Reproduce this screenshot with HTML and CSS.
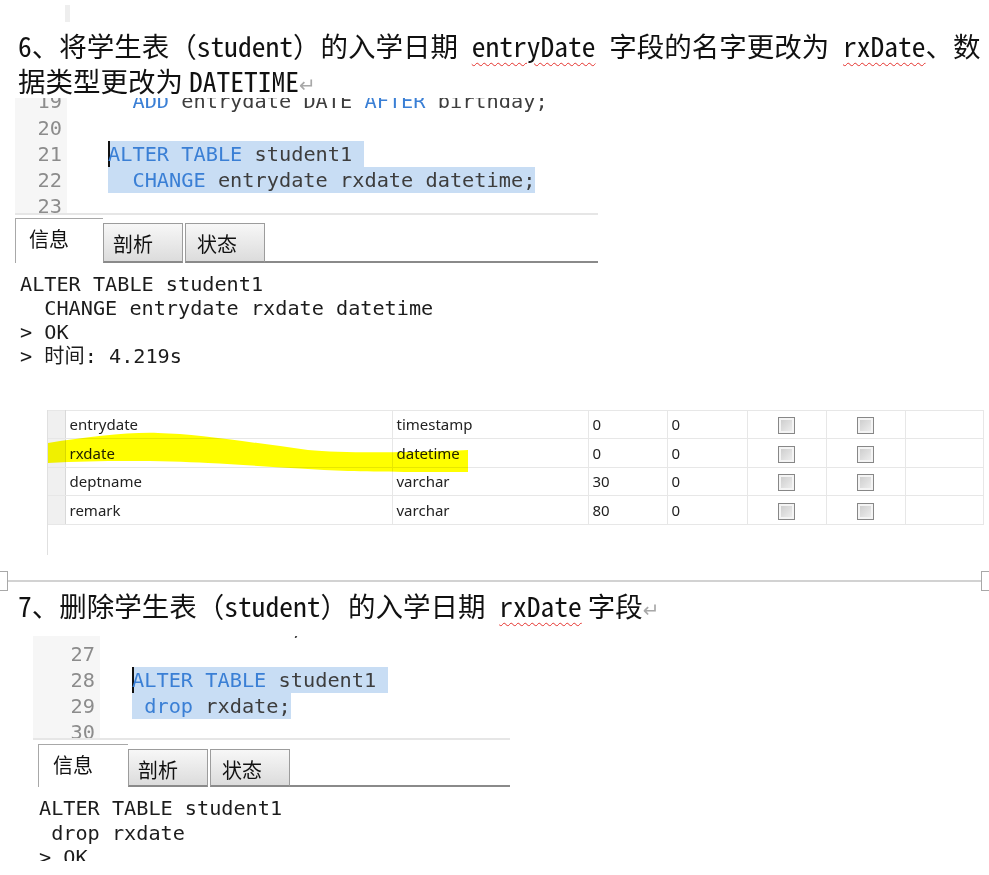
FILE: index.html
```html
<!DOCTYPE html>
<html lang="zh">
<head>
<meta charset="utf-8">
<title>ALTER TABLE 练习</title>
<link rel="stylesheet" href="styles.css">
</head>
<body>
<div class="topmark"></div>
<p class="q q1">6、将学生表（student）的入学日期 <span class="sp">entryDate</span> 字段的名字更改为 <span class="sp">rxDate</span>、数<br>据类型更改为<span class="lat">DATETIME</span><span class="ret">↵</span></p>

<div class="shot shot1">
  <div class="editor ed1">
    <div class="lines">
      <div class="ln"><span class="num">19</span><span class="code">  <span class="kw">ADD</span> entrydate DATE <span class="kw">AFTER</span> birthday;</span></div>
      <div class="ln"><span class="num">20</span><span class="code"></span></div>
      <div class="ln"><span class="num">21</span><span class="code"><span class="sel caret"><span class="kw">ALTER TABLE</span> student1 </span></span></div>
      <div class="ln"><span class="num">22</span><span class="code"><span class="sel">  <span class="kw">CHANGE</span> entrydate rxdate datetime;</span></span></div>
      <div class="ln"><span class="num">23</span><span class="code"></span></div>
    </div>
  </div>
  <div class="tabs tabs1">
    <div class="tab on">信息</div>
    <div class="tab">剖析</div>
    <div class="tab t3">状态</div>
    <div class="rest"></div>
  </div>
  <div class="msg msg1">ALTER TABLE student1
  CHANGE entrydate rxdate datetime
&gt; OK
&gt; 时间: 4.219s</div>
</div>

<div class="grid-wrap">
  <table class="fields">
    <colgroup>
      <col class="c-g"><col class="c-name"><col class="c-type"><col class="c-n"><col class="c-n2"><col class="c-n"><col class="c-n"><col class="c-last">
    </colgroup>
    <tbody>
      <tr><td class="g"></td><td>entrydate</td><td>timestamp</td><td>0</td><td>0</td><td class="ck"><span class="cb"></span></td><td class="ck"><span class="cb"></span></td><td></td></tr>
      <tr><td class="g"></td><td>rxdate</td><td>datetime</td><td>0</td><td>0</td><td class="ck"><span class="cb"></span></td><td class="ck"><span class="cb"></span></td><td></td></tr>
      <tr><td class="g"></td><td>deptname</td><td>varchar</td><td>30</td><td>0</td><td class="ck"><span class="cb"></span></td><td class="ck"><span class="cb"></span></td><td></td></tr>
      <tr><td class="g"></td><td>remark</td><td>varchar</td><td>80</td><td>0</td><td class="ck"><span class="cb"></span></td><td class="ck"><span class="cb"></span></td><td></td></tr>
    </tbody>
  </table>
  <svg class="marker" width="430" height="70" viewBox="0 0 430 70" aria-hidden="true">
    <path d="M0,33 C40,27 80,22 110,23 C150,24 200,32 260,40 C300,44 380,42 420,40 L420,62 C380,62 330,62 300,61 C250,59 200,55 160,53 C120,51 60,50 0,53 Z" fill="#ffff00"/>
  </svg>
</div>

<div class="divider">
  <span class="corner left"></span>
  <span class="rule"></span>
  <span class="corner right"></span>
</div>

<p class="q q2">7、删除学生表（student）的入学日期 <span class="sp sp-tight">rxDate</span>字段<span class="ret">↵</span></p>

<div class="shot shot2">
  <div class="editor ed2">
    <div class="lines">
      <div class="ln"><span class="num">26</span><span class="code">  DROP rxdate;</span></div>
      <div class="ln"><span class="num">27</span><span class="code"></span></div>
      <div class="ln"><span class="num">28</span><span class="code"><span class="sel caret"><span class="kw">ALTER TABLE</span> student1 </span></span></div>
      <div class="ln"><span class="num">29</span><span class="code"><span class="sel"> <span class="kw">drop</span> rxdate;</span></span></div>
      <div class="ln"><span class="num">30</span><span class="code"></span></div>
    </div>
  </div>
  <div class="tabs tabs2">
    <div class="tab on">信息</div>
    <div class="tab">剖析</div>
    <div class="tab t3">状态</div>
    <div class="rest"></div>
  </div>
  <div class="msg msg2">ALTER TABLE student1
 drop rxdate
&gt; OK</div>
</div>
</body>
</html>
```

FILE: styles.css
```css
* { box-sizing: border-box; }
html, body { margin: 0; padding: 0; background: #fff; }
body {
  width: 989px;
  height: 875px;
  overflow: hidden;
  font-family: "Noto Sans CJK SC", sans-serif;
  color: #111;
}

.topmark { width: 5px; height: 17px; margin: 5px 0 0 65px; background: #eeeeee; }

.q {
  margin: 0;
  padding-left: 18px;
  font-family: "Noto Sans Mono CJK SC", "Noto Sans CJK SC", monospace;
  font-size: 27.5px;
  line-height: 35px;
  color: #111;
  white-space: nowrap;
}
.q1 { margin-top: 5.5px; height: 70px; }
.q2 { height: 35px; margin-top: -3px; }
.sp {
  text-decoration: underline wavy #e5322d;
  text-decoration-thickness: 1px;
  text-underline-offset: 5px;
}
.sp-tight { margin-right: 6px; }
.lat { margin-left: 6px; }
.ret {
  color: #a8a8a8;
  font-family: "DejaVu Sans", sans-serif;
  font-size: 20px;
  line-height: 1;
}

/* code editor */
.shot1 { margin-left: 15px; width: 583px; }
.shot2 { margin: 13.5px 0 0 33px; width: 477px; }

.editor {
  overflow: hidden;
  border-bottom: 2px solid #e6e6e6;
  font-family: "DejaVu Sans Mono", monospace;
  font-size: 20.3px;
}
.ed1 { height: 117px; }
.ed1 .lines { margin-top: -10px; }
.ed2 { height: 104px; }
.ed2 .lines { margin-top: -21px; }

.ln { display: flex; height: 26px; line-height: 26px; }
.ed1 .ln:first-child { height: 27px; }
.num {
  flex: none;
  background: #f6f6f6;
  color: #8c8c8c;
  text-align: right;
  padding-right: 5px;
}
.ed1 .num { width: 52px; }
.ed2 .num { width: 67px; }
.code { white-space: pre; color: #3d3d3d; }
.ed1 .code { padding-left: 41px; }
.ed2 .code { padding-left: 32px; }
.kw { color: #3a7fd5; }
.sel { background: #c8ddf4; display: inline-block; height: 26px; }
.caret { box-shadow: inset 2px 0 0 #111; }

/* result tabs */
.tabs { display: flex; align-items: flex-end; }
.tabs1 { height: 45px; margin-top: 3px; }
.tabs2 { height: 43px; margin: 4px 0 0 5px; }
.tab {
  font-family: "Noto Sans CJK SC", sans-serif;
  font-size: 20px;
  line-height: 20px;
  color: #111;
  border: 1px solid #9c9c9c;
  border-bottom: 2px solid #8a8a8a;
  background: linear-gradient(#f7f7f7, #dcdcdc);
  width: 80px;
  padding: 10px 0 0 9px;
}
.tab.t3 { margin-left: 2px; padding-left: 11px; }
.tab.on {
  background: #fff;
  border-bottom: none;
  border-right: none;
  border-color: #a8a8a8;
  padding-left: 13px;
}
.tabs1 .tab { height: 40px; }
.tabs1 .tab.on { height: 45px; width: 88px; }
.tabs2 .tab { height: 38px; }
.tabs2 .tab.on { height: 43px; width: 90px; padding-left: 14px; }
.rest { flex: 1; border-bottom: 2px solid #8a8a8a; }

.msg {
  font-family: "DejaVu Sans Mono", "Noto Sans CJK SC", monospace;
  font-size: 20.2px;
  color: #1c1c1c;
  white-space: pre;
  padding-top: 9px;
}
.msg1 { line-height: 24px; padding-left: 5px; height: 105px; }
.msg2 { line-height: 24.5px; padding-left: 6px; height: 74px; overflow: hidden; }

/* field grid */
.grid-wrap {
  position: relative;
  margin: 42px 0 0 47px;
  width: 942px;
  height: 145px;
  border-left: 1px solid #e0e0e0;
}
.fields {
  border-collapse: collapse;
  table-layout: fixed;
  width: 935px;
  font-family: "Noto Sans", sans-serif;
  font-size: 15px;
  color: #222;
}
.c-g { width: 17px; }
.c-name { width: 327px; }
.c-type { width: 196px; }
.c-n { width: 79px; }
.c-n2 { width: 80px; }
.c-last { width: 78px; }
.fields td {
  height: 28.5px;
  border: 1px solid #e7e7e7;
  padding: 0 0 0 4px;
  white-space: nowrap;
}
.fields td.g { background: #f0f0f0; border-left: none; border-right-color: #d9d9d9; padding: 0; }
.fields td.ck { text-align: center; padding: 0; }
.cb {
  display: inline-block;
  width: 17px;
  height: 17px;
  vertical-align: middle;
  border: 1px solid #878787;
  background: linear-gradient(135deg, #c9c9c9, #f2f2f2);
  box-shadow: inset 0 0 0 2px #f4f4f4;
}
.marker {
  position: absolute;
  left: 0;
  top: 0;
  mix-blend-mode: multiply;
  pointer-events: none;
}

/* page boundary */
.divider {
  display: flex;
  align-items: center;
  height: 20px;
  margin-top: 16px;
}
.corner { flex: none; width: 8px; height: 20px; border: 1px solid #a8a8a8; }
.corner.left { border-left: none; }
.corner.right { border-right: none; }
.rule { flex: 1; height: 2px; background: #d2d2d2; }
```
